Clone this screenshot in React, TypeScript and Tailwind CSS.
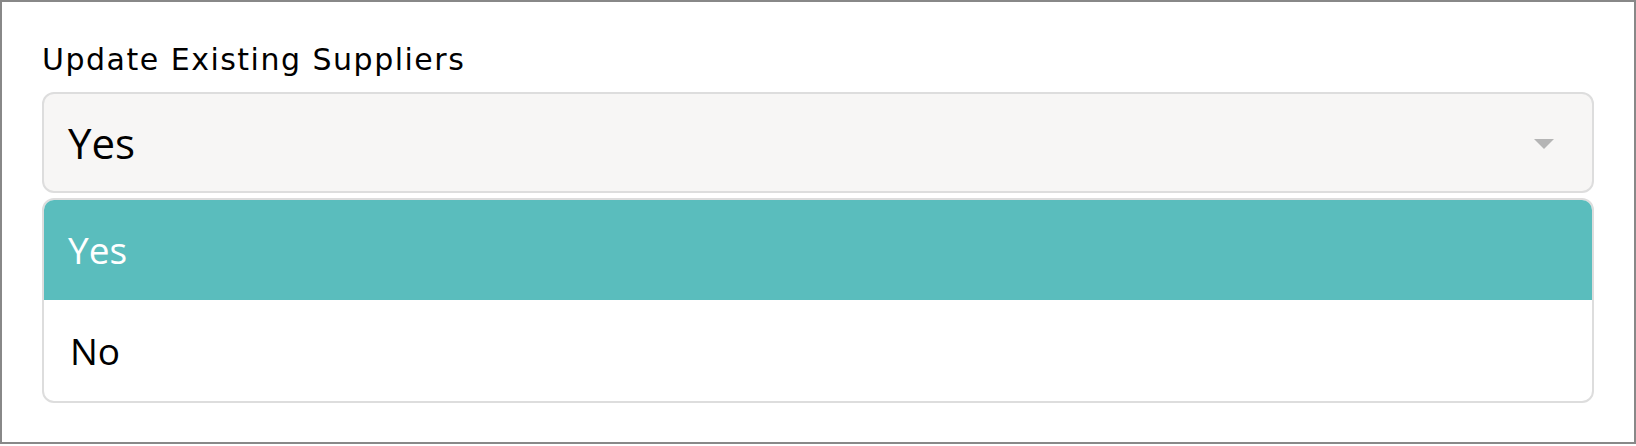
import React from 'react';

const options = ['Yes', 'No'];

export default function App() {
  const selected = 'Yes';

  return (
    <div className="w-[1636px] h-[444px] border-2 border-[#888888] bg-white px-[40px] pt-[38px] font-['Open_Sans',sans-serif] text-black">
      <label className="block font-['DejaVu_Sans',sans-serif] text-[30px] leading-[40px] tracking-[1.5px] mb-[12px]">
        Update Existing Suppliers
      </label>

      <div className="flex h-[101px] items-center justify-between rounded-[12px] border-2 border-[#dddddd] bg-[#f7f6f5] pl-[24px] pr-[38px]">
        <span className="text-[42px] leading-none">{selected}</span>
        <svg width="20" height="10" viewBox="0 0 20 10" className="mt-[2px]">
          <path d="M0 0 L20 0 L10 10 Z" fill="#b5b5b5" />
        </svg>
      </div>

      <ul className="mt-[5px] overflow-hidden rounded-[12px] border-2 border-[#dddddd] bg-white">
        {options.map((opt) => (
          <li
            key={opt}
            className={
              opt === selected
                ? 'flex h-[100px] items-center bg-[#5abdbd] pl-[24px] text-[37px] text-white'
                : 'flex h-[101px] items-center pl-[26px] text-[37px] text-black'
            }
          >
            {opt}
          </li>
        ))}
      </ul>
    </div>
  );
}
